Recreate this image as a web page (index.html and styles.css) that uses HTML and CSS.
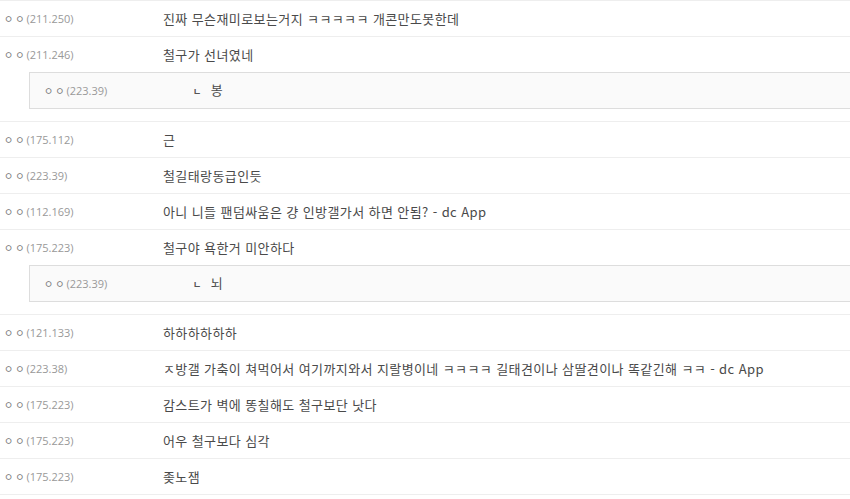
FILE: index.html
```html
<!DOCTYPE html>
<html lang="ko">
<head>
    <meta charset="UTF-8">
    <meta name="viewport" content="width=device-width, initial-scale=1.0">
    <title>댓글</title>
    <link rel="stylesheet" href="styles.css">
</head>
<body>
    <!-- Comment list -->
    <ul class="cmt-list">
        <li class="cmt">
            <div class="cmt-nick"><span class="nick">ㅇㅇ</span><span class="ip">(211.250)</span></div>
            <p class="cmt-txt">진짜 무슨재미로보는거지 ㅋㅋㅋㅋㅋ 개콘만도못한데</p>
        </li>
        <li class="cmt">
            <div class="cmt-nick"><span class="nick">ㅇㅇ</span><span class="ip">(211.246)</span></div>
            <p class="cmt-txt">철구가 선녀였네</p>
        </li>
        <li class="reply-box">
            <div class="cmt reply">
                <div class="cmt-nick"><span class="nick">ㅇㅇ</span><span class="ip">(223.39)</span></div>
                <p class="cmt-txt"><span class="mark">ㄴ</span>봉</p>
            </div>
        </li>
        <li class="cmt">
            <div class="cmt-nick"><span class="nick">ㅇㅇ</span><span class="ip">(175.112)</span></div>
            <p class="cmt-txt">근</p>
        </li>
        <li class="cmt">
            <div class="cmt-nick"><span class="nick">ㅇㅇ</span><span class="ip">(223.39)</span></div>
            <p class="cmt-txt">철길태랑동급인듯</p>
        </li>
        <li class="cmt">
            <div class="cmt-nick"><span class="nick">ㅇㅇ</span><span class="ip">(112.169)</span></div>
            <p class="cmt-txt">아니 니들 팬덤싸움은 걍 인방갤가서 하면 안됨? - dc App</p>
        </li>
        <li class="cmt">
            <div class="cmt-nick"><span class="nick">ㅇㅇ</span><span class="ip">(175.223)</span></div>
            <p class="cmt-txt">철구야 욕한거 미안하다</p>
        </li>
        <li class="reply-box">
            <div class="cmt reply">
                <div class="cmt-nick"><span class="nick">ㅇㅇ</span><span class="ip">(223.39)</span></div>
                <p class="cmt-txt"><span class="mark">ㄴ</span>뇌</p>
            </div>
        </li>
        <li class="cmt">
            <div class="cmt-nick"><span class="nick">ㅇㅇ</span><span class="ip">(121.133)</span></div>
            <p class="cmt-txt">하하하하하하</p>
        </li>
        <li class="cmt">
            <div class="cmt-nick"><span class="nick">ㅇㅇ</span><span class="ip">(223.38)</span></div>
            <p class="cmt-txt">ㅈ방갤 가축이 쳐먹어서 여기까지와서 지랄병이네 ㅋㅋㅋㅋ 길태견이나 삼딸견이나 똑같긴해 ㅋㅋ - dc App</p>
        </li>
        <li class="cmt">
            <div class="cmt-nick"><span class="nick">ㅇㅇ</span><span class="ip">(175.223)</span></div>
            <p class="cmt-txt">감스트가 벽에 똥칠해도 철구보단 낫다</p>
        </li>
        <li class="cmt">
            <div class="cmt-nick"><span class="nick">ㅇㅇ</span><span class="ip">(175.223)</span></div>
            <p class="cmt-txt">어우 철구보다 심각</p>
        </li>
        <li class="cmt">
            <div class="cmt-nick"><span class="nick">ㅇㅇ</span><span class="ip">(175.223)</span></div>
            <p class="cmt-txt">좆노잼</p>
        </li>
    </ul>
</body>
</html>
```

FILE: styles.css
```css
/* Reset and base styles */
* {
    box-sizing: border-box;
    margin: 0;
    padding: 0;
}

body {
    font-family: "Noto Sans CJK KR", "Noto Sans", sans-serif;
    font-size: 13px;
    color: #4a4a4a;
    background-color: #fff;
}

/* Comment list */
.cmt-list {
    list-style: none;
    border-bottom: 1px solid #eee;
}

.cmt {
    display: flex;
    align-items: center;
    height: 36px;
    padding-left: 4px;
    border-top: 1px solid #eee;
}

.cmt-nick {
    width: 159px;
    flex-shrink: 0;
    display: flex;
    align-items: center;
}

.nick {
    font-size: 10px;
    color: #777;
    letter-spacing: 2px;
}

.ip {
    font-family: "Open Sans", "DejaVu Sans", sans-serif;
    font-size: 11px;
    color: #999;
}

.cmt-txt {
    white-space: nowrap;
    line-height: 18px;
    letter-spacing: 0.4px;
}

/* Replies */
.reply-box {
    padding-bottom: 12px;
}

.reply {
    height: 37px;
    margin-left: 29px;
    padding-left: 14px;
    background-color: #fafafa;
    border: 1px solid #ddd;
    border-right: none;
}

.reply .cmt-nick {
    width: 149px;
}

.mark {
    font-size: 9px;
    font-weight: bold;
    color: #555;
    margin-right: 9px;
}
```
